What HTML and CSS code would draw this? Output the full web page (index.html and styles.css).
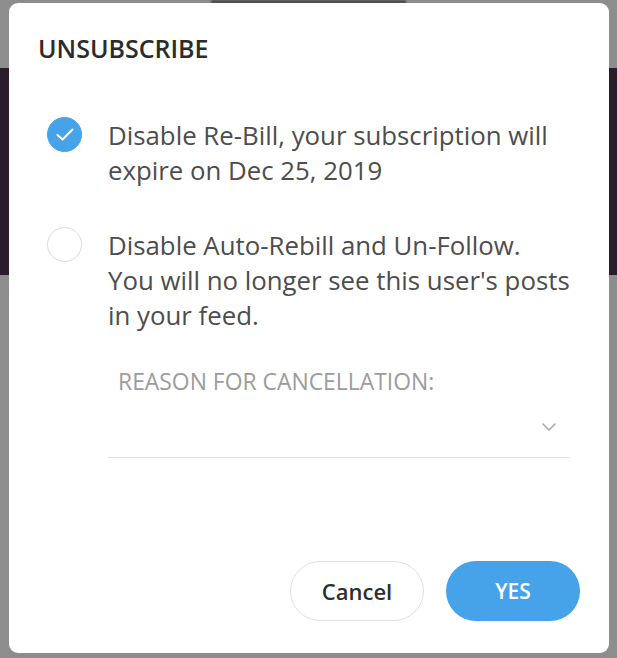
FILE: index.html
```html
<!DOCTYPE html>
<html lang="en">
<head>
  <meta charset="UTF-8" />
  <meta name="viewport" content="width=device-width, initial-scale=1.0" />
  <title>Unsubscribe</title>
  <link rel="stylesheet" href="styles.css">
</head>
<body>

  <!-- Page behind the dialog -->
  <div class="page">
    <div class="page-head"></div>
    <div class="cover"></div>
  </div>

  <!-- Dialog overlay -->
  <div class="overlay">
    <div class="modal">
      <h2 class="modal-title">UNSUBSCRIBE</h2>

      <label class="option">
        <span class="radio checked">
          <svg width="20" height="15" viewBox="0 0 20 15">
            <path d="M2.5 8 L7.5 12.5 L17.5 2.5" fill="none" stroke="#fff" stroke-width="2" stroke-linecap="round" stroke-linejoin="round"/>
          </svg>
        </span>
        <span class="option-text">Disable Re-Bill, your subscription will<br>expire on Dec 25, 2019</span>
      </label>

      <label class="option">
        <span class="radio"></span>
        <span class="option-text">Disable Auto-Rebill and Un-Follow.<br>You will no longer see this user's posts<br>in your feed.</span>
      </label>

      <div class="reason">
        <div class="reason-label">REASON FOR CANCELLATION:</div>
        <div class="select">
          <svg width="16" height="10" viewBox="0 0 16 10">
            <path d="M2 2 L8 8 L14 2" fill="none" stroke="#a8a8a8" stroke-width="1.6" stroke-linecap="round" stroke-linejoin="round"/>
          </svg>
        </div>
      </div>

      <div class="actions">
        <button class="btn btn-cancel">Cancel</button>
        <button class="btn btn-yes">YES</button>
      </div>
    </div>
  </div>

</body>
</html>
```

FILE: styles.css
```css
body {
  margin: 0;
  background-color: #8d8d8d;
  font-family: "Open Sans", "Liberation Sans", sans-serif;
  overflow: hidden;
}

/* Page content under the overlay */
.page {
  height: 658px;
}

.page-head {
  width: 195px;
  height: 4px;
  margin: 0 auto;
  background-color: #4a4a4a;
  filter: blur(1px);
}

.cover {
  margin-top: 64px;
  height: 207px;
  background-color: #2b1c2c;
}

/* Overlay holding the dialog */
.overlay {
  position: fixed;
  inset: 0;
  padding: 3px 8px 5px 9px;
}

.modal {
  height: 100%;
  box-sizing: border-box;
  background-color: #fff;
  border-radius: 9px;
  padding: 30px 29px 32px 29px;
  display: flex;
  flex-direction: column;
}

.modal-title {
  margin: 0;
  font-size: 25px;
  line-height: 30px;
  font-weight: 600;
  color: #2c2c2c;
}

/* Radio options */
.option {
  display: flex;
  align-items: flex-start;
  gap: 26px;
  margin-top: 40px;
  cursor: pointer;
}

.option:first-of-type {
  margin-top: 55px;
}

.radio {
  flex: none;
  width: 35px;
  height: 35px;
  box-sizing: border-box;
  margin: -1px 0 0 9px;
  border: 1.5px solid #dcdcdc;
  border-radius: 50%;
  display: flex;
  align-items: center;
  justify-content: center;
}

.radio.checked {
  background-color: #46a3e9;
  border-color: #46a3e9;
}

.option-text {
  font-size: 25.8px;
  line-height: 35px;
  color: #4d4d4d;
  white-space: nowrap;
}

/* Cancellation reason select */
.reason {
  margin: 34px 10px 0 70px;
}

.reason-label {
  padding-left: 10px;
  font-size: 22.9px;
  line-height: 30px;
  color: #9c9c9c;
}

.select {
  height: 60px;
  border-bottom: 1px solid #e6e6e6;
  display: flex;
  align-items: center;
  justify-content: flex-end;
  padding-right: 13px;
}

/* Buttons */
.actions {
  margin-top: auto;
  display: flex;
  justify-content: flex-end;
  gap: 22px;
}

.btn {
  width: 134px;
  height: 60px;
  border-radius: 30px;
  font-family: inherit;
  font-weight: 600;
  cursor: pointer;
}

.btn-cancel {
  background-color: #fff;
  border: 1px solid #e0e0e0;
  color: #2e2e2e;
  font-size: 22px;
}

.btn-yes {
  background-color: #46a3e9;
  border: none;
  color: #fff;
  font-size: 21px;
}
```
